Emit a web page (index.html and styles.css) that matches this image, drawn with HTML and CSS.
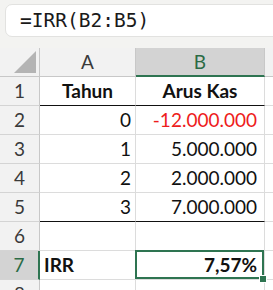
FILE: index.html
```html
<!DOCTYPE html>
<html>
<head>
<meta charset="utf-8">
<link rel="stylesheet" href="styles.css">
</head>
<body>
<div class="formula-area">
  <div class="formula-box">=IRR(B2:B5)</div>
</div>
<div class="sheet">
  <div class="cell corner"><span class="tri"></span></div>
  <div class="cell colhead">A</div>
  <div class="cell colhead sel">B</div>
  <div class="cell colhead rest"></div>

  <div class="cell rowhead">1</div>
  <div class="cell center bold thick">Tahun</div>
  <div class="cell center bold thick">Arus Kas</div>
  <div class="cell rest"></div>

  <div class="cell rowhead">2</div>
  <div class="cell num a">0</div>
  <div class="cell num b neg">-12.000.000</div>
  <div class="cell rest"></div>

  <div class="cell rowhead">3</div>
  <div class="cell num a">1</div>
  <div class="cell num b">5.000.000</div>
  <div class="cell rest"></div>

  <div class="cell rowhead">4</div>
  <div class="cell num a">2</div>
  <div class="cell num b">2.000.000</div>
  <div class="cell rest"></div>

  <div class="cell rowhead">5</div>
  <div class="cell num a thick">3</div>
  <div class="cell num b thick">7.000.000</div>
  <div class="cell rest"></div>

  <div class="cell rowhead">6</div>
  <div class="cell"></div>
  <div class="cell"></div>
  <div class="cell rest"></div>

  <div class="cell rowhead sel">7</div>
  <div class="cell bold label">IRR</div>
  <div class="cell num b bold active">7,57%<span class="handle"></span></div>
  <div class="cell rest"></div>

  <div class="cell rowhead">8</div>
  <div class="cell"></div>
  <div class="cell"></div>
  <div class="cell rest"></div>
</div>
</body>
</html>
```

FILE: styles.css
```css
html, body {
  margin: 0;
  padding: 0;
  background: #ffffff;
  overflow: hidden;
}

body {
  width: 273px;
  height: 290px;
  font-family: Lato, "Open Sans", sans-serif;
  color: #111;
}

.formula-area {
  height: 48px;
  box-sizing: border-box;
  padding: 4px 0 0 5px;
  background: #f3f3f1;
  overflow: hidden;
}

.formula-box {
  height: 33px;
  box-sizing: border-box;
  margin-right: -20px;
  background: #ffffff;
  border: 1px solid #e2e2e0;
  border-radius: 7px;
  padding-left: 14px;
  font-family: "DejaVu Sans Mono", "Liberation Mono", monospace;
  font-size: 19.5px;
  line-height: 31px;
  color: #1a1a1a;
}

.sheet {
  display: grid;
  grid-template-columns: 40px 96px 129px 1fr;
  grid-auto-rows: 29px;
}

.cell {
  box-sizing: border-box;
  border-right: 1px solid #dcdcdc;
  border-bottom: 1px solid #dcdcdc;
  font-size: 19px;
  line-height: 28px;
  white-space: nowrap;
  position: relative;
}

.corner {
  background: #f2f2f2;
  border-right: 1px solid #c8c8c8;
  border-bottom: 1px solid #c8c8c8;
}

.tri {
  position: absolute;
  right: 3px;
  bottom: 3px;
  width: 0;
  height: 0;
  border-left: 22px solid transparent;
  border-bottom: 22px solid #b4b4b4;
}

.colhead {
  background: #f2f2f2;
  border-right: 1px solid #c8c8c8;
  border-bottom: 1px solid #c8c8c8;
  text-align: center;
  color: #3a3a3a;
  line-height: 28px;
}

.colhead.sel {
  background: #d3d3d3;
  color: #2b6b45;
  border-bottom: 2px solid #2e7451;
}

.rowhead {
  background: #f2f2f2;
  border-right: 1px solid #c8c8c8;
  border-bottom: 1px solid #d4d4d4;
  text-align: center;
  color: #3a3a3a;
}

.rowhead.sel {
  background: #d3d3d3;
  color: #2b6b45;
  border-right: 2px solid #2e7451;
}

.rest {
  border-right: none;
}

.colhead.rest {
  border-right: none;
}

.center {
  text-align: center;
}

.bold {
  font-weight: 700;
}

.thick {
  border-bottom: 1px solid #111;
}

.num {
  text-align: right;
}

.num.a {
  padding-right: 4px;
}

.num.b {
  padding-right: 7px;
}

.neg {
  color: #ee1c1c;
}

.label {
  padding-left: 4px;
}

.active {
  padding-right: 5px;
}

.active::after {
  content: "";
  position: absolute;
  top: -1px;
  left: -1px;
  right: 0;
  bottom: 0;
  border: 2px solid #2e7451;
  pointer-events: none;
}

.handle {
  position: absolute;
  right: -3px;
  bottom: -4px;
  width: 6px;
  height: 6px;
  background: #2e7451;
  border: 1px solid #ffffff;
  z-index: 2;
}
```
